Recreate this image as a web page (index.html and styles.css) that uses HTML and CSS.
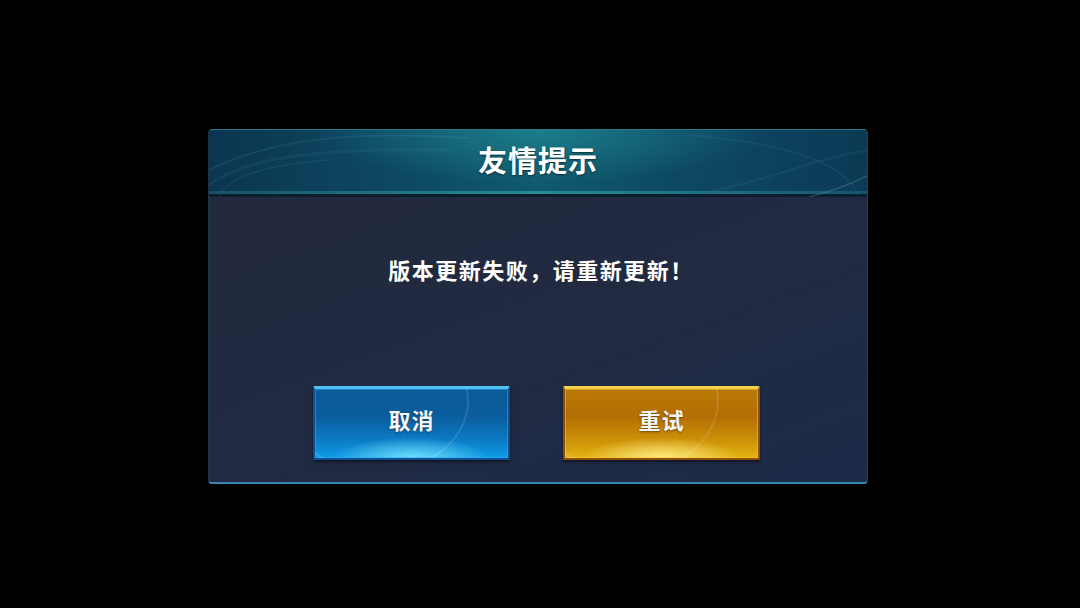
FILE: index.html
```html
<!DOCTYPE html>
<html lang="zh">
<head>
<meta charset="utf-8">
<link rel="stylesheet" href="styles.css">
</head>
<body>
<div class="stage">
  <div class="dialog">
    <div class="header">
      <svg class="swirl" width="660" height="67" viewBox="0 0 660 67" preserveAspectRatio="none">
        <path d="M0 40 C60 10 140 0 260 8" stroke="rgba(120,200,220,0.10)" stroke-width="2" fill="none"/>
        <path d="M0 55 C40 25 120 18 240 20" stroke="rgba(120,200,220,0.07)" stroke-width="3" fill="none"/>
        <path d="M10 67 C20 45 60 35 120 30" stroke="rgba(120,200,220,0.10)" stroke-width="1.5" fill="none"/>
        <path d="M660 20 C600 30 560 50 500 62" stroke="rgba(120,200,220,0.08)" stroke-width="2" fill="none"/>
        <path d="M660 45 C640 55 620 62 600 67" stroke="rgba(150,220,230,0.22)" stroke-width="1.5" fill="none"/>
        <path d="M650 67 C640 40 600 15 480 5" stroke="rgba(120,200,220,0.07)" stroke-width="2" fill="none"/>
      </svg>
      <h1 class="title">友情提示</h1>
    </div>
    <div class="body">
      <p class="message">版本更新失败，请重新更新！</p>
      <div class="actions">
        <button class="btn btn-blue"><span>取消</span></button>
        <button class="btn btn-gold"><span>重试</span></button>
      </div>
    </div>
  </div>
</div>
</body>
</html>
```
FILE: styles.css
```css
* { box-sizing: border-box; }
html, body { margin: 0; padding: 0; background: #000; }
body {
  width: 1080px;
  height: 608px;
  font-family: "Noto Sans CJK SC", "Noto Sans", sans-serif;
  overflow: hidden;
}
.stage {
  width: 1080px;
  height: 608px;
  display: flex;
  justify-content: center;
  padding-top: 129px;
}
.dialog {
  width: 660px;
  height: 355px;
  margin-left: -4px;
  border-radius: 4px;
  overflow: hidden;
  display: flex;
  flex-direction: column;
  background: linear-gradient(160deg, #23293d 0%, #212a41 50%, #1d2a48 100%);
  border-bottom: 2px solid #3a86b8;
  border-left: 1px solid #1c3348;
  border-right: 1px solid #22405a;
}
.header {
  position: relative;
  height: 68px;
  flex: none;
  background:
    radial-gradient(ellipse 50% 120% at 50% 0%, rgba(40,160,170,0.5), rgba(20,110,130,0) 70%),
    linear-gradient(90deg, #0c3550 0%, #0d4a62 30%, #0f5a6c 50%, #0d4a62 70%, #0c3a55 100%);
  border-top: 1px solid #2a7a8e;
  border-bottom: 3px solid #0b1e2e;
  display: flex;
  align-items: center;
  justify-content: center;
}
.header::after {
  content: "";
  position: absolute;
  left: 0; right: 0; bottom: 0;
  height: 3px;
  background: linear-gradient(90deg, rgba(40,130,150,0.35), rgba(60,170,180,0.6) 50%, rgba(40,130,150,0.35));
}
.swirl { position: absolute; left: 0; top: 0; }
.title {
  position: relative;
  margin: 0;
  color: #fff;
  font-size: 29px;
  font-weight: 700;
  letter-spacing: 1px;
  line-height: 1;
  margin-top: -6px;
  text-shadow: 0 1px 2px rgba(0,0,0,0.5);
}
.body {
  flex: 1;
  display: flex;
  flex-direction: column;
  align-items: center;
}
.message {
  margin: 59px 0 0;
  color: #fff;
  font-size: 22px;
  font-weight: 700;
  line-height: 26px;
  letter-spacing: 1.5px;
  margin-left: 6px;
}
.actions {
  display: flex;
  gap: 53px;
  margin-top: 104px;
  margin-left: -3px;
}
.btn {
  width: 197px;
  height: 74px;
  border-radius: 2px;
  font-family: inherit;
  font-size: 22px;
  font-weight: 700;
  color: #f4f6f8;
  padding: 0;
  display: flex;
  align-items: center;
  justify-content: center;
  position: relative;
  overflow: hidden;
  letter-spacing: 1px;
}
.btn span { position: relative; margin-top: -10px; text-shadow: 0 1px 2px rgba(0,0,0,0.45); }
.btn::before {
  content: "";
  position: absolute;
  left: -30px; top: -60px;
  width: 180px; height: 140px;
  border-radius: 50%;
  border: 2px solid rgba(255,255,255,0.12);
}
.btn-blue {
  border: 2px solid #0a4e93;
  border-top: 3px solid #4cc3f4;
  background:
    radial-gradient(ellipse 40% 30% at 50% 100%, rgba(120,230,255,0.9), rgba(40,170,240,0) 100%),
    linear-gradient(180deg, #0b5a98 0%, #0a5d9d 40%, #0c7cc6 75%, #109be6 100%);
  box-shadow: inset 0 0 0 1px rgba(60,170,240,0.5), 0 2px 3px rgba(0,0,0,0.5);
}
.btn-gold {
  border: 2px solid #8c4e08;
  border-top: 3px solid #f4d34a;
  background:
    radial-gradient(ellipse 40% 30% at 50% 100%, rgba(255,240,140,0.9), rgba(240,200,40,0) 100%),
    linear-gradient(180deg, #b97a06 0%, #b46e04 40%, #cc9208 75%, #e4b414 100%);
  box-shadow: inset 0 0 0 1px rgba(250,200,60,0.5), 0 2px 3px rgba(0,0,0,0.5);
}
```
